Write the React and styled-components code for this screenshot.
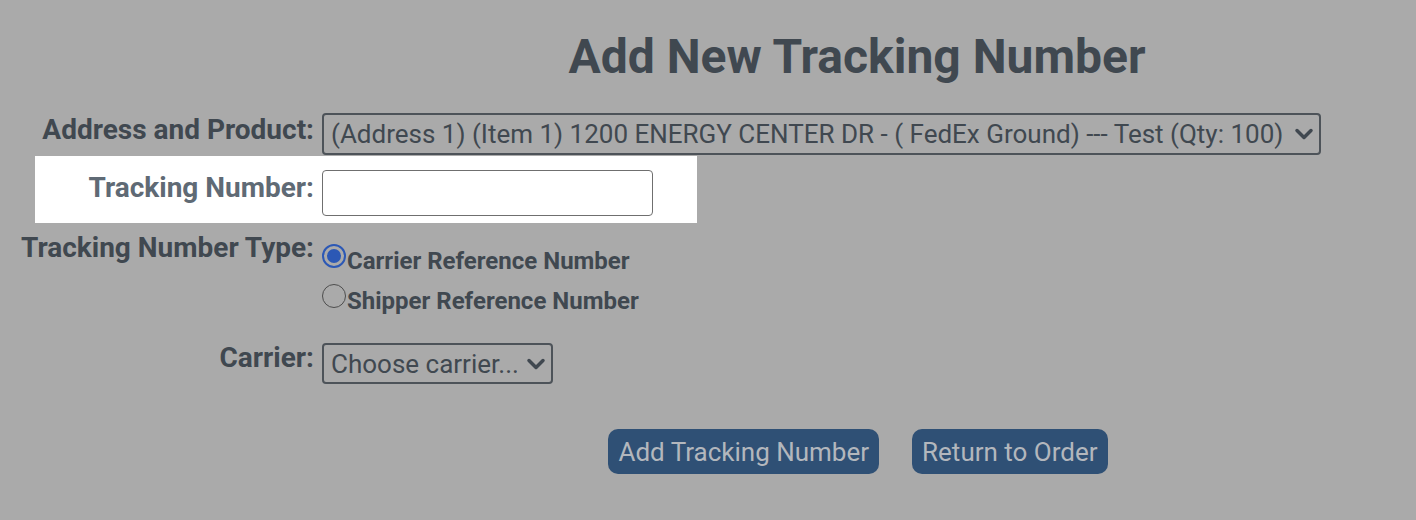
import React, { useState } from "react";
import styled, { createGlobalStyle } from "styled-components";
import { ChevronDown } from "lucide-react";

const GlobalStyle = createGlobalStyle`
  html, body {
    margin: 0;
    padding: 0;
    background: #aaaaaa;
  }
  body {
    font-family: Roboto, "Liberation Sans", Arial, sans-serif;
    color: #404850;
  }
`;

const Page = styled.div`
  width: 1416px;
  height: 520px;
  background: #aaaaaa;
  overflow: hidden;
`;

const Title = styled.h1`
  margin: 0;
  padding: 26px 0 0 298px;
  text-align: center;
  font-size: 48px;
  font-weight: 700;
  line-height: 62px;
  color: #404850;
`;

const Form = styled.div`
  margin-top: 24px;
  display: flex;
  flex-direction: column;
`;

const Row = styled.div`
  display: grid;
  grid-template-columns: ${(p) => (p.$highlight ? "279px auto" : "314px auto")};
  column-gap: 8px;
  align-items: start;
  width: ${(p) => (p.$highlight ? "662px" : "auto")};
  margin-left: ${(p) => (p.$highlight ? "35px" : "0")};
  padding: ${(p) => (p.$highlight ? "14px 0 7px" : "0")};
  background: ${(p) => (p.$highlight ? "#ffffff" : "transparent")};
  margin-top: ${(p) => p.$top || 0}px;
`;

const Label = styled.label`
  text-align: right;
  font-size: 28px;
  font-weight: 700;
  line-height: 32px;
  padding-top: ${(p) => (p.$pad === undefined ? 2 : p.$pad)}px;
  color: ${(p) => (p.$highlight ? "#5f6a75" : "#404850")};
  white-space: nowrap;
`;

const SelectWrap = styled.div`
  position: relative;
  width: ${(p) => p.$width}px;
  height: ${(p) => p.$height}px;
  margin-top: ${(p) => p.$offset || 0}px;
`;

const Select = styled.select`
  appearance: none;
  width: 100%;
  height: 100%;
  box-sizing: border-box;
  border: 2px solid #4d5359;
  border-radius: 4px;
  background: transparent;
  color: #404850;
  font-family: Roboto, "Liberation Sans", Arial, sans-serif;
  font-size: 26px;
  padding: 0 34px 0 7px;
  outline: none;
`;

const Chevron = styled(ChevronDown)`
  position: absolute;
  right: 3px;
  top: 50%;
  transform: translateY(-50%);
  pointer-events: none;
  color: #404850;
`;

const Input = styled.input`
  width: 331px;
  height: 46px;
  box-sizing: border-box;
  border: 1.5px solid #6f6f6f;
  border-radius: 4px;
  background: #ffffff;
  font-size: 24px;
  padding: 0 8px;
  outline: none;
`;

const RadioList = styled.div`
  display: flex;
  flex-direction: column;
  gap: 12px;
  padding-top: 17px;
`;

const RadioOption = styled.label`
  display: flex;
  align-items: center;
  font-size: 24px;
  font-weight: 700;
  line-height: 28px;
  color: #404850;
  cursor: pointer;
`;

const RadioDot = styled.input`
  appearance: none;
  flex: none;
  margin: 0 1px 0 0;
  width: 24px;
  height: 24px;
  border-radius: 50%;
  box-sizing: border-box;
  border: 1.5px solid #4d4d4d;
  background: transparent;
  position: relative;
  top: -5px;

  &:checked {
    border: 2px solid #2c58b5;
  }
  &:checked::after {
    content: "";
    position: absolute;
    inset: 3px;
    border-radius: 50%;
    background: #2c58b5;
  }
`;

const Buttons = styled.div`
  display: flex;
  justify-content: center;
  gap: 33px;
  padding-left: 300px;
  margin-top: 45px;
`;

const Button = styled.button`
  height: 45px;
  padding: 0 10px;
  border: none;
  border-radius: 10px;
  background: #2f5075;
  color: #b3b7bd;
  font-family: Roboto, "Liberation Sans", Arial, sans-serif;
  font-size: 26px;
  cursor: pointer;
`;

const App = () => {
  const [type, setType] = useState("carrier");
  return (
    <Page>
      <GlobalStyle />
      <Title>Add New Tracking Number</Title>
      <Form>
        <Row>
          <Label>Address and Product:</Label>
          <SelectWrap $width={999} $height={42} $offset={1}>
            <Select defaultValue="a1">
              <option value="a1">
                (Address 1) (Item 1) 1200 ENERGY CENTER DR - ( FedEx Ground) --- Test (Qty: 100)
              </option>
            </Select>
            <Chevron size={28} strokeWidth={3} />
          </SelectWrap>
        </Row>
        <Row $highlight $top={1}>
          <Label $highlight>Tracking Number:</Label>
          <Input type="text" />
        </Row>
        <Row $top={7}>
          <Label>Tracking Number Type:</Label>
          <RadioList>
            <RadioOption>
              <RadioDot
                type="radio"
                name="type"
                checked={type === "carrier"}
                onChange={() => setType("carrier")}
              />
              Carrier Reference Number
            </RadioOption>
            <RadioOption>
              <RadioDot
                type="radio"
                name="type"
                checked={type === "shipper"}
                onChange={() => setType("shipper")}
              />
              Shipper Reference Number
            </RadioOption>
          </RadioList>
        </Row>
        <Row $top={25}>
          <Label>Carrier:</Label>
          <SelectWrap $width={231} $height={41} $offset={3}>
            <Select defaultValue="">
              <option value="">Choose carrier...</option>
            </Select>
            <Chevron size={28} strokeWidth={3} />
          </SelectWrap>
        </Row>
      </Form>
      <Buttons>
        <Button>Add Tracking Number</Button>
        <Button>Return to Order</Button>
      </Buttons>
    </Page>
  );
};

export default App;
